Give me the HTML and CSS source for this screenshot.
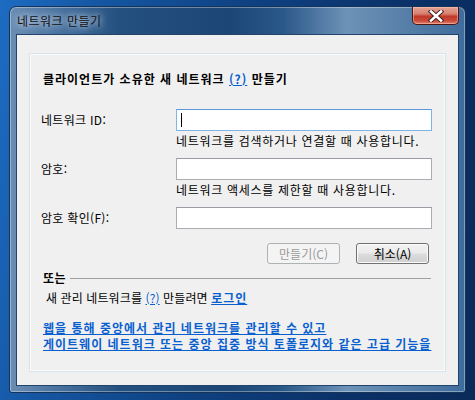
FILE: index.html
```html
<!DOCTYPE html>
<html lang="ko">
<head>
    <meta charset="UTF-8">
    <title>네트워크 만들기</title>
    <link rel="stylesheet" href="styles.css">
</head>
<body>

<div class="window">
    <div class="titlebar">
        <span class="title">네트워크 만들기</span>
        <div class="close">
            <svg width="16" height="12" viewBox="0 0 16 12">
                <path d="M3 1.5 L13 10.5 M13 1.5 L3 10.5" stroke="#3a1a18" stroke-width="4.4" stroke-linecap="square"/>
                <path d="M3 1.5 L13 10.5 M13 1.5 L3 10.5" stroke="#ffffff" stroke-width="2.6" stroke-linecap="square"/>
            </svg>
        </div>
    </div>

    <div class="client">
        <div class="panel">
            <p class="heading">클라이언트가 소유한 새 네트워크 <a class="help">(?)</a> 만들기</p>

            <div class="form">
                <label class="label">네트워크 ID:</label>
                <div class="field">
                    <div class="box focused"><span class="caret"></span></div>
                    <div class="hint">네트워크를 검색하거나 연결할 때 사용합니다.</div>
                </div>

                <label class="label">암호:</label>
                <div class="field">
                    <div class="box"></div>
                    <div class="hint">네트워크 액세스를 제한할 때 사용합니다.</div>
                </div>

                <label class="label">암호 확인(F):</label>
                <div class="field">
                    <div class="box"></div>
                </div>
            </div>

            <div class="buttons">
                <button class="btn" disabled>만들기(C)</button>
                <button class="btn">취소(A)</button>
            </div>

            <div class="or">
                <span class="or-text">또는</span>
                <span class="or-line"></span>
            </div>

            <p class="login">새 관리 네트워크를 <a class="help">(?)</a> 만들려면 <a class="link">로그인</a></p>

            <p class="links">
                <a class="link">웹을 통해 중앙에서 관리 네트워크를 관리할 수 있고 </a><br>
                <a class="link">게이트웨이 네트워크 또는 중앙 집중 방식 토폴로지와 같은 고급 기능을</a>
            </p>
        </div>
    </div>
</div>

</body>
</html>
```

FILE: styles.css
```css
html, body {
    margin: 0;
    height: 100%;
}

body {
    padding: 6px 9px 0;
    box-sizing: border-box;
    overflow: hidden;
    background: linear-gradient(100deg, #1d6cc2 0%, #1557a3 18%, #0f4283 45%, #0b3168 75%, #0a2a5a 100%);
    font-family: "Noto Sans CJK KR", "Noto Sans", sans-serif;
    font-size: 12px;
    color: #000;
}

.window {
    width: 457px;
    height: 387px;
    box-sizing: border-box;
    border: 1px solid #16345a;
    border-radius: 7px 7px 3px 3px;
    background: linear-gradient(to right, #6b8db3 0%, #4a73a0 10%, #24507f 24%, #1b4676 48%, #2a5888 60%, #6e92b8 74%, #5880a9 86%, #3f6c9c 100%);
    box-shadow: inset 0 0 0 1px rgba(255, 255, 255, 0.35);
    display: flex;
    flex-direction: column;
}

.titlebar {
    height: 27px;
    display: flex;
    justify-content: space-between;
    align-items: flex-start;
    padding: 0 6px 0 7px;
}

.title {
    margin-top: 7px;
    font-size: 12px;
    line-height: 14px;
    letter-spacing: 0.5px;
    color: #111;
    text-shadow: 0 0 6px #d8e4f0, 0 0 10px #c5d6e8;
}

.close {
    width: 45px;
    height: 17px;
    border: 1px solid #4a1713;
    border-top: none;
    border-radius: 0 0 5px 5px;
    background: linear-gradient(#e3a596 0%, #d7806f 40%, #c0392a 55%, #c94a38 80%, #e0826a 100%);
    box-shadow: inset 0 0 0 1px rgba(255, 200, 190, 0.5);
    display: flex;
    align-items: center;
    justify-content: center;
}

.client {
    flex: 1;
    margin: 0 6px 6px;
    background: #f0f0f0;
    border: 1px solid #21446c;
    display: flex;
}

.panel {
    flex: 1;
    margin: 18px 12px 13px;
    border: 1px solid #d9e3ea;
    box-shadow: inset 0 0 0 1px #fafbfc;
}

.heading {
    margin: 17px 0 0 13px;
    font-weight: bold;
    line-height: 16px;
    letter-spacing: 1px;
}

.help {
    color: #0a5fcf;
    text-decoration: underline;
}

.form {
    margin: 22px 0 0 11px;
    display: grid;
    grid-template-columns: 135px 256px;
    row-gap: 9px;
    align-items: start;
}

.label {
    line-height: 16px;
    margin-top: 3px;
    letter-spacing: 0.3px;
}

.box {
    height: 20px;
    border: 1px solid #abadb3;
    border-top-color: #9a9ca3;
    background: #fff;
    padding-left: 4px;
    display: flex;
    align-items: center;
}

.box.focused {
    border-color: #7eb4ea;
    border-top-color: #5c9bd9;
}

.caret {
    width: 1px;
    height: 14px;
    background: #000;
}

.hint {
    margin-top: 2px;
    line-height: 16px;
    letter-spacing: 0.7px;
}

.buttons {
    margin: 14px 16px 0 0;
    display: flex;
    justify-content: flex-end;
    gap: 16px;
}

.btn {
    width: 73px;
    height: 21px;
    padding: 0;
    font-family: inherit;
    font-size: 12px;
    color: #000;
    border: 1px solid #707070;
    border-radius: 3px;
    background: linear-gradient(#f2f2f2 0%, #ebebeb 48%, #dddddd 52%, #cfcfcf 100%);
    box-shadow: inset 0 0 0 1px #fcfcfc;
}

.btn:disabled {
    color: #9a9a9a;
    border-color: #adb2b5;
    background: #f4f4f4;
    box-shadow: none;
}

.or {
    margin: 6px 14px 0 13px;
    display: flex;
    align-items: center;
    gap: 4px;
}

.or-text {
    font-weight: bold;
    line-height: 16px;
    letter-spacing: 0.5px;
}

.or-line {
    flex: 1;
    height: 1px;
    background: #a0a0a0;
    margin-top: 1px;
}

.login {
    margin: 4px 0 0 16px;
    line-height: 16px;
    letter-spacing: 0.1px;
}

.login .link {
    letter-spacing: 1px;
}

.link {
    color: #0a5fcf;
    font-weight: bold;
    text-decoration: underline;
}

.links {
    margin: 14px 0 0 13px;
    line-height: 16px;
    white-space: nowrap;
    overflow: hidden;
    letter-spacing: 1px;
}
```
